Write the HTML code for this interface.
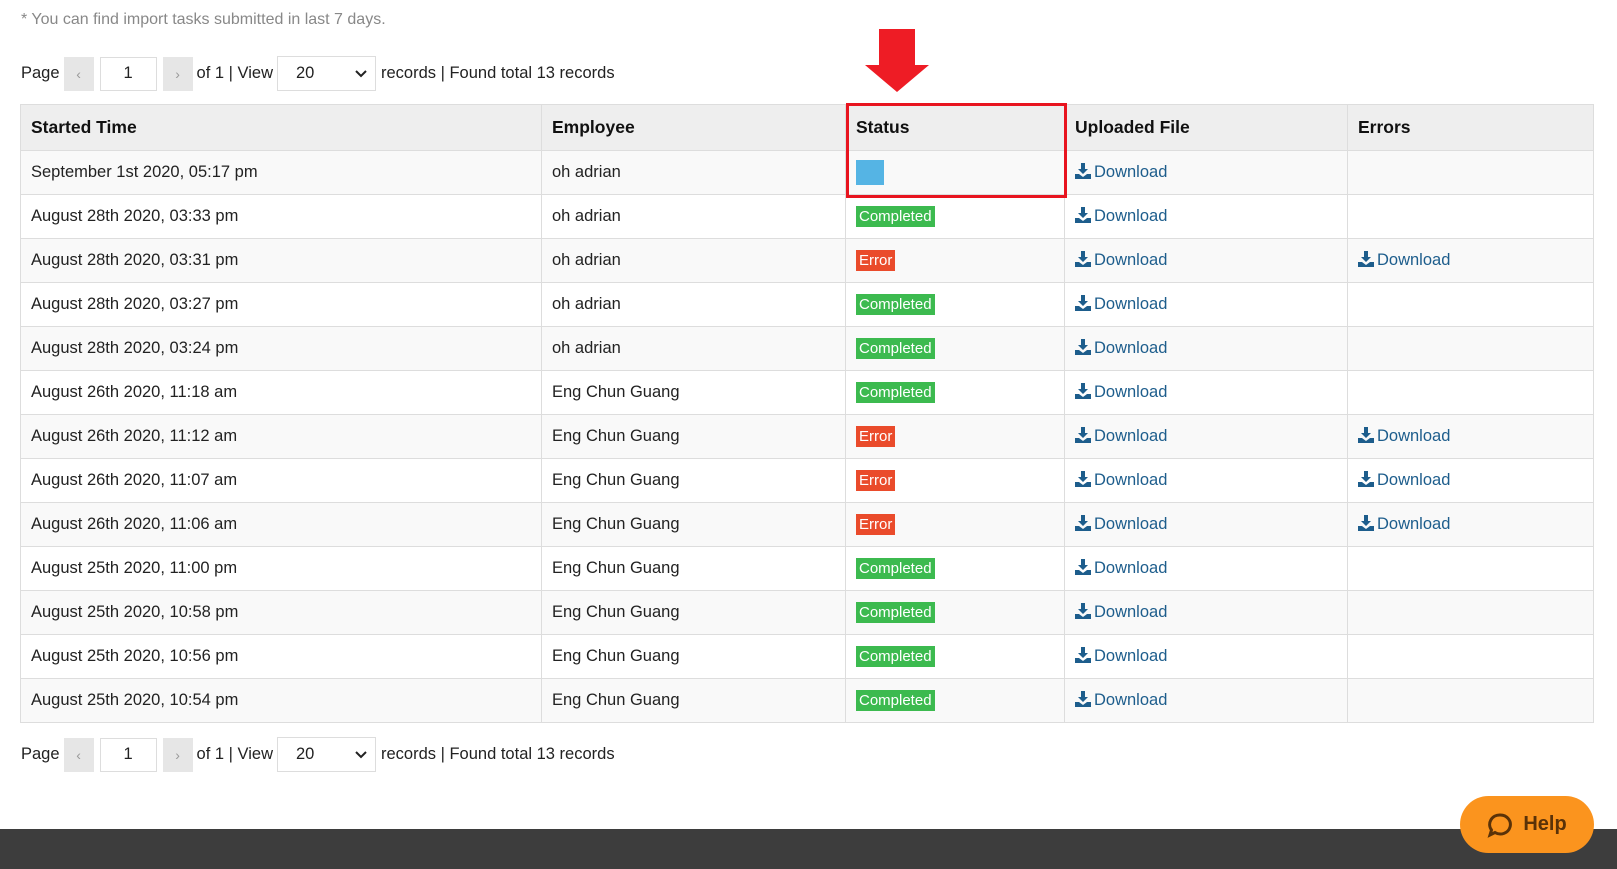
<!DOCTYPE html>
<html><head><meta charset="utf-8"><style>
*{box-sizing:border-box;margin:0;padding:0}
body{width:1617px;height:869px;background:#fff;font-family:"Liberation Sans",sans-serif;color:#222;position:relative;overflow:hidden;font-size:16.5px}
.note{position:absolute;left:21px;top:11px;color:#888;font-size:16px}
.pg{position:absolute;left:21px;height:35px;display:flex;align-items:center;font-size:16.5px;color:#222}
.btn{width:30px;height:34px;background:#e6e6e6;color:#999;display:flex;align-items:center;justify-content:center;font-size:14px}
.inp{width:57px;height:34px;border:1px solid #ddd;display:flex;align-items:center;justify-content:center;margin:0 6px}
.sel{width:99px;height:35px;border:1px solid #ddd;display:flex;align-items:center;padding-left:18px;position:relative;margin:0 5px 0 4px}
.sel svg{position:absolute;right:8px;top:13px}
table{position:absolute;left:20px;top:104px;border-collapse:collapse;width:1574px}
td,th{border:1px solid #ddd;text-align:left;padding:0 10px;height:44px;font-weight:normal}
tr{height:44px}
th{background:#eee;font-size:17.5px;height:46px;color:#111;font-weight:bold}
tr:nth-child(odd) td{background:#f9f9f9}
.b{display:inline-block;color:#fff;font-size:15px;padding:0 3px;line-height:21px}
.c{background:#3cba4f}.e{background:#ea4b2b}
a{color:#1d5d8c;text-decoration:none}
a svg{vertical-align:-2px;margin-right:3px}
.foot{position:absolute;left:0;top:829px;width:1617px;height:40px;background:#3d3d3d}
.help{position:absolute;left:1460px;top:796px;width:134px;height:57px;border-radius:29px;background:#fb941e;color:#5a3208;font-weight:bold;font-size:20px;display:flex;align-items:center;justify-content:center;gap:10px}
</style></head><body>
<div class="note">* You can find import tasks submitted in last 7 days.</div>
<div class="pg" style="top:56px"><span style="margin-right:4px">Page</span><div class="btn">‹</div><div class="inp">1</div><div class="btn">›</div><span style="margin-left:4px">of 1 | View</span><div class="sel">20<svg width="12" height="8"><path d="M1 1l5 5 5-5" stroke="#222" stroke-width="2" fill="none"/></svg></div><span>records | Found total 13 records</span></div>
<svg style="position:absolute;left:864px;top:29px" width="66" height="64"><path d="M15 0h36v36h14L33 63 1 36h14z" fill="#ee1c25"/></svg>
<table>
<tr><th style="width:521px">Started Time</th><th style="width:304px">Employee</th><th style="width:219px">Status</th><th style="width:283px">Uploaded File</th><th>Errors</th></tr>
</table>
<div style="position:absolute;left:846px;top:103px;width:221px;height:95px;border:3px solid #e8141f"></div>
<div class="foot"></div>
<div class="help"><svg width="26" height="26" viewBox="0 0 26 26"><path d="M13 3a10 9.5 0 1 1-5 17.5L3 23l1.5-5A10 9.5 0 0 1 13 3z" fill="none" stroke="#5a3208" stroke-width="3"/></svg>Help</div>
<script>
const rows=[["September 1st 2020, 05:17 pm","oh adrian","p",0],["August 28th 2020, 03:33 pm","oh adrian","c",0],["August 28th 2020, 03:31 pm","oh adrian","e",1],["August 28th 2020, 03:27 pm","oh adrian","c",0],["August 28th 2020, 03:24 pm","oh adrian","c",0],["August 26th 2020, 11:18 am","Eng Chun Guang","c",0],["August 26th 2020, 11:12 am","Eng Chun Guang","e",1],["August 26th 2020, 11:07 am","Eng Chun Guang","e",1],["August 26th 2020, 11:06 am","Eng Chun Guang","e",1],["August 25th 2020, 11:00 pm","Eng Chun Guang","c",0],["August 25th 2020, 10:58 pm","Eng Chun Guang","c",0],["August 25th 2020, 10:56 pm","Eng Chun Guang","c",0],["August 25th 2020, 10:54 pm","Eng Chun Guang","c",0]];
const ic='<svg width="16" height="16" viewBox="0 0 16 16"><path d="M6 0h4v6h3l-5 5-5-5h3z M0 11h4l4 3 4-3h4v5H0z" fill="#1d5d8c"/></svg>';
const dl='<a>'+ic+'Download</a>';
let h='';rows.forEach(r=>{let s=r[2]=='p'?'<span style="display:inline-block;width:28px;height:25px;background:#55b4e4;vertical-align:middle"></span>':r[2]=='c'?'<span class="b c">Completed</span>':'<span class="b e">Error</span>';
h+=`<tr><td>${r[0]}</td><td>${r[1]}</td><td>${s}</td><td>${dl}</td><td>${r[3]?dl:''}</td></tr>`});
document.querySelector('table').insertAdjacentHTML('beforeend',h);
</script>
<div class="pg" style="top:737px"><span style="margin-right:4px">Page</span><div class="btn">‹</div><div class="inp">1</div><div class="btn">›</div><span style="margin-left:4px">of 1 | View</span><div class="sel">20<svg width="12" height="8"><path d="M1 1l5 5 5-5" stroke="#222" stroke-width="2" fill="none"/></svg></div><span>records | Found total 13 records</span></div>
</body></html>
